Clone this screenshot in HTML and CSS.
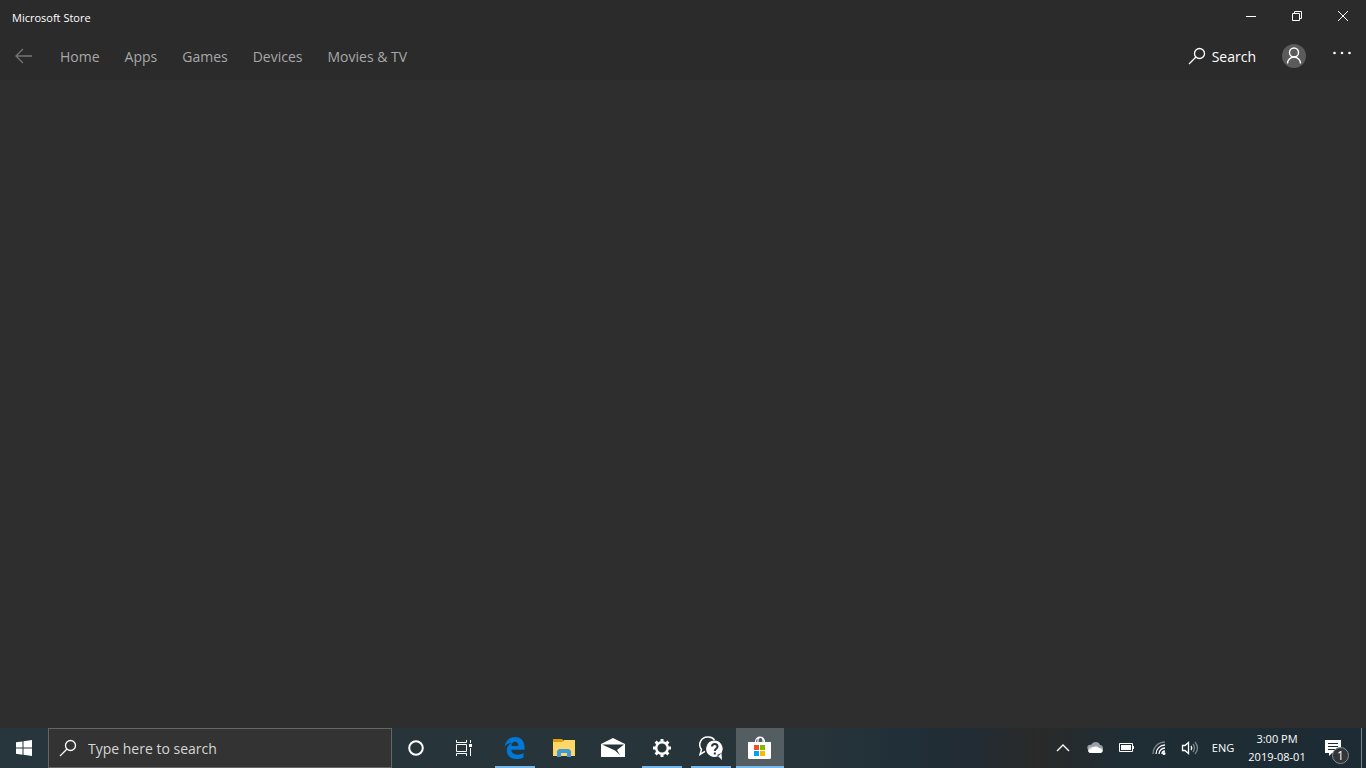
FILE: index.html
```html
<!DOCTYPE html>
<html lang="en">
  <head>
    <meta charset="UTF-8" />
    <meta name="viewport" content="width=device-width, initial-scale=1.0" />
    <title>Microsoft Store</title>
    <link rel="stylesheet" href="styles.css">
  </head>
  <body>
    <div class="desktop">
      <!-- store window -->
      <div class="window">
        <header class="header">
          <div class="titlebar">
            <h1 class="title">Microsoft Store</h1>
            <div class="controls">
              <button type="button" aria-label="Minimize">
                <svg width="12" height="12" viewBox="0 0 12 12"><path d="M1 6.500h10" /></svg>
              </button>
              <button type="button" aria-label="Restore">
                <svg width="12" height="12" viewBox="0 0 12 12"><path d="M1.500 3.500h7v7h-7zM3.500 3.500v-2h7v7h-2" /></svg>
              </button>
              <button type="button" aria-label="Close">
                <svg width="12" height="12" viewBox="0 0 12 12"><path d="M1 1l10 10M11 1L1 11" /></svg>
              </button>
            </div>
          </div>
          <div class="navbar">
            <button type="button" class="back" aria-label="Back">
              <svg width="18" height="16" viewBox="0 0 18 16"><path stroke-width="1.300" d="M17 8H1.500M8 1L1 8l7 7" /></svg>
            </button>
            <nav class="nav">
              <a href="#">Home</a>
              <a href="#">Apps</a>
              <a href="#">Games</a>
              <a href="#">Devices</a>
              <a href="#">Movies &amp; TV</a>
            </nav>
            <div class="tools">
              <button type="button" class="find">
                <svg width="18" height="18" viewBox="0 0 18 18"><circle cx="11.500" cy="6.500" r="5" stroke-width="1.300" /><path stroke-width="1.300" d="M8 10l-7 7" /></svg>
                <span>Search</span>
              </button>
              <button type="button" class="account" aria-label="Account">
                <svg width="24" height="24" viewBox="0 0 24 24"><circle cx="12" cy="12" r="12" class="disc" /><circle cx="12" cy="8.500" r="4.500" stroke-width="1.400" /><path stroke-width="1.400" d="M5.500 19.500a6.500 6.500 0 0 1 13 0" /></svg>
              </button>
              <button type="button" class="more" aria-label="See more">
                <svg width="20" height="10" viewBox="0 0 20 10"><circle class="solid" cx="2.500" cy="4" r="1.300" /><circle class="solid" cx="10" cy="4" r="1.300" /><circle class="solid" cx="17.500" cy="4" r="1.300" /></svg>
              </button>
            </div>
          </div>
        </header>
        <main class="main"></main>
      </div>

      <!-- taskbar -->
      <footer class="taskbar">
        <button type="button" class="task" aria-label="Start">
          <svg width="16" height="16" viewBox="0 0 16 16"><path class="solid" d="M0 2.300L6.500 1.400V7.500H0zM7.500 1.200L16 0V7.500H7.500zM0 8.500H6.500V14.700L0 13.800zM7.500 8.500H16V16L7.500 14.800z" /></svg>
        </button>
        <label class="search">
          <svg width="18" height="18" viewBox="0 0 18 18"><circle cx="11.500" cy="6.500" r="5" stroke-width="1.300" /><path stroke-width="1.300" d="M8 10l-7 7" /></svg>
          <input type="text" placeholder="Type here to search" aria-label="Type here to search" />
        </label>
        <button type="button" class="task" aria-label="Cortana">
          <svg width="18" height="18" viewBox="0 0 18 18"><circle cx="9" cy="9" r="6.800" stroke-width="2" /></svg>
        </button>
        <button type="button" class="task" aria-label="Task view">
          <svg width="18" height="16" viewBox="0 0 18 16"><path d="M1.500 0v2.500h10V0M1.500 4.500h10v7h-10zM1.500 16v-2.500h10V16M15.500 0v3M15.500 8v8" /><path class="solid" d="M14 4h3v3h-3z" /></svg>
        </button>
        <div class="apps">
          <button type="button" class="task open" aria-label="Microsoft Edge">
            <svg width="22" height="22" viewBox="0 0 22 22"><path class="edge" d="M.500 10C1.500 4 5.500 0 11 0C17.500 0 20.500 4.500 20.500 10v2.800H7.200c.3 3.300 3.300 4.900 6.300 4.900 2.400 0 4.400-.7 6-1.700v4.400C17.500 21.500 15 22 12.500 22 6.500 22 2.800 18.400 2.800 13.500c0-3.500 2-6.200 5.200-7.700C4.500 5.900 2.300 7.400.500 10zM7.400 9h6.900c0-2.700-1.200-4.200-3.500-4.200C8.800 4.800 7.500 6.900 7.400 9z" /></svg>
          </button>
          <button type="button" class="task" aria-label="File Explorer">
            <svg width="22" height="20" viewBox="0 0 22 20"><path fill="#e09c0b" stroke="none" d="M0 1h9l1 1v3H0z" /><path fill="#ffd766" stroke="none" d="M0 4h9l2-2h11v16H0z" /><path fill="#3f99dc" stroke="none" d="M6 11h10l2 2v6h-4v-4H8v4H4v-6z" /></svg>
          </button>
          <button type="button" class="task" aria-label="Mail">
            <svg width="24" height="20" viewBox="0 0 24 20"><path class="solid" fill-rule="evenodd" d="M0 6L12 0l12 6v13H0zM1 6.500l13 6 5 4.500-3-5 7-5.500z" /></svg>
          </button>
          <button type="button" class="task open" aria-label="Settings">
            <svg width="20" height="20" viewBox="0 0 20 20"><circle cx="10" cy="10" r="5.800" stroke-width="2.400" /><path stroke-width="3" d="M10 1v3M10 16v3M1 10h3M16 10h3M3.600 3.600l2.200 2.200M14.200 14.200l2.200 2.200M3.600 16.400l2.200-2.200M14.200 5.800l2.200-2.200" /></svg>
          </button>
          <button type="button" class="task open" aria-label="Get Help">
            <svg width="24" height="24" viewBox="0 0 24 24"><path stroke-width="1.500" d="M9 1a7.500 7.500 0 0 1 6.500 3M6 15.300L1 18.500l1.500-5A7.700 7.700 0 0 1 9 1" /><path class="solid" d="M15.500 4.500a8.200 8.200 0 1 1-4 15.400 8.200 8.200 0 0 1 4-15.400zM18 19l5 5-.500-7z" /><path class="mark" d="M13 10.500c0-3.500 5.500-3.500 5.500 0 0 2.300-2.700 2.300-2.700 4.500M15.800 16.500v2" /></svg>
          </button>
          <button type="button" class="task active" aria-label="Microsoft Store">
            <svg width="24" height="24" viewBox="0 0 24 24"><path stroke-width="1.200" d="M7.500 7V5.500a4.500 4.500 0 0 1 9 0V7M10 7V4c0-3.500 5-3.500 5 0v3" /><path class="solid" d="M0 6h23v15.500q0 1.500-1.500 1.500h-20q-1.500 0-1.500-1.500z" /><path fill="#f25022" stroke="none" d="M6 9h5v5H6z" /><path fill="#7fba00" stroke="none" d="M12 9h5v5h-5z" /><path fill="#00a4ef" stroke="none" d="M6 15h5v5H6z" /><path fill="#ffb900" stroke="none" d="M12 15h5v5h-5z" /></svg>
          </button>
        </div>

        <!-- notification area -->
        <div class="tray">
          <button type="button" aria-label="Show hidden icons">
            <svg width="14" height="10" viewBox="0 0 14 10"><path stroke-width="1.400" d="M1 8l6-6 6 6" /></svg>
          </button>
          <button type="button" aria-label="OneDrive">
            <svg width="16" height="12" viewBox="0 0 16 12"><path fill="#9aa1a4" stroke="none" d="M1 8C-1 4 2 2 4 3c2-4 8-4 9 0 3 0 4 4 2 6z" /><path fill="#c8ccce" stroke="none" d="M2 10C0 7 3 4 6 5l8 4v2H3z" /><path class="solid" d="M3 11c-3-1-2-4 1-4 2-3 6-3 8-1 4 0 5 4 2 5z" /></svg>
          </button>
          <button type="button" aria-label="Battery">
            <svg width="16" height="10" viewBox="0 0 16 10"><path d="M.500.500h13v8H.500z" /><path class="solid" d="M2 2h10v5H2zM14 3h1v3h-1z" /></svg>
          </button>
          <button type="button" aria-label="Wi-Fi">
            <svg width="14" height="14" viewBox="0 0 14 14"><path class="dim" stroke-width="1.300" d="M1 13A12 12 0 0 1 13 1" /><path stroke-width="1.300" d="M4 13a9 9 0 0 1 9-9M7 13a6 6 0 0 1 6-6M10 13a3 3 0 0 1 3-3" /><circle class="solid" cx="12" cy="12.500" r="1.500" /></svg>
          </button>
          <button type="button" class="volume" aria-label="Volume">
            <svg width="18" height="14" viewBox="0 0 18 14"><path stroke-width="1.300" d="M1.500 4.500h2.500l3.500-3v11l-3.500-3H1.500zM10 5q1.500 2 0 4" /><path class="dim" stroke-width="1.300" d="M12 3q3 4 0 8M14 1q5 6 0 12" /></svg>
          </button>
          <button type="button" class="lang">ENG</button>
          <button type="button" class="clock"><span>3:00 PM</span><span>2019-08-01</span></button>
          <button type="button" class="notice" aria-label="Notifications, 1 new">
            <svg width="16" height="16" viewBox="0 0 16 16"><path class="solid" d="M0 0h16v13H7l-3 3v-3H0z" /><path class="lines" d="M3 3.500h10M3 6.500h10M3 9.500h7" /></svg>
            <span class="badge">1</span>
          </button>
          <button type="button" class="peek" aria-label="Show desktop"></button>
        </div>
      </footer>
    </div>
  </body>
</html>
```
FILE: styles.css
```css
* {
  margin: 0;
  padding: 0;
  box-sizing: border-box;
}
button {
  border: none;
  background: none;
  color: inherit;
  font: inherit;
  display: flex;
  justify-content: center;
  align-items: center;
}
a {
  text-decoration: none;
  color: inherit;
}
svg {
  flex: none;
  fill: none;
  stroke: #fff;
}
.solid {
  fill: #fff;
  stroke: none;
}

.desktop {
  min-height: 100vh;
  display: flex;
  flex-direction: column;
  color: #fff;
  font: 14px/20px 'Open Sans', 'Noto Sans', sans-serif;
}

/* store window */
.window {
  flex: 1;
  display: flex;
  flex-direction: column;
  background: #2e2e2e;
}
.header {
  background: #2b2b2b;
}
.titlebar {
  height: 32px;
  display: flex;
  justify-content: space-between;
}
.title {
  padding: 8px 12px;
  font-size: 11px;
  font-weight: 400;
}
.controls {
  display: flex;
}
.controls button {
  width: 46px;
}
.navbar {
  height: 48px;
  display: flex;
  align-items: center;
}
.back {
  width: 48px;
  height: 48px;
}
.back svg {
  stroke: #747474;
}
.nav {
  display: flex;
  gap: 25px;
  padding: 2px 12px 0;
  color: #a8a8a8;
}
.tools {
  margin-left: auto;
  display: flex;
  align-items: center;
}
.find {
  gap: 6px;
}
.find span {
  padding-top: 2px;
}
.account {
  width: 48px;
  margin-left: 14px;
}
.account .disc {
  fill: #5b5b5b;
  stroke: none;
}
.more {
  width: 48px;
  padding-bottom: 4px;
}
.main {
  flex: 1;
}

/* taskbar */
.taskbar {
  height: 40px;
  display: flex;
  background: linear-gradient(90deg, #27363c 0, #27343a 60%, #202f38 66%, #222c34 71%, #292a29 76%, #1f2d34 82%, #1c2b34 100%);
}
.task {
  width: 48px;
  height: 40px;
  position: relative;
}
.search {
  width: 344px;
  padding: 0 10px;
  border: 1px solid #666;
  background: #333;
  display: flex;
  align-items: center;
  gap: 11px;
}
.search input {
  flex: 1;
  min-width: 0;
  padding-top: 2px;
  border: none;
  outline: none;
  background: none;
  color: #fff;
  font: inherit;
}
.search input::placeholder {
  color: #d6d6d6;
}
.apps {
  display: flex;
  gap: 1px;
  padding-left: 3px;
}
.open::after,
.active::after {
  content: '';
  position: absolute;
  left: 4px;
  right: 4px;
  bottom: 0;
  height: 2px;
  background: #76b9ed;
}
.active {
  background: #535d62;
}
.active::after {
  left: 0;
  right: 0;
}
.edge {
  fill: #0078d7;
  stroke: none;
}
.mark {
  stroke: #27343a;
  stroke-width: 2;
}

/* notification area */
.tray {
  margin-left: auto;
  display: flex;
  font-size: 11px;
}
.tray button {
  width: 32px;
}
.dim {
  stroke: #7b868c;
}
.tray .volume {
  width: 30px;
}
.tray .lang {
  width: 36px;
}
.tray .clock {
  width: 72px;
  flex-direction: column;
  line-height: 18px;
}
.tray .notice {
  width: 48px;
  padding-right: 8px;
  position: relative;
}
.lines {
  stroke: #1c2b34;
}
.badge {
  position: absolute;
  right: 12px;
  bottom: 4px;
  width: 17px;
  height: 17px;
  border: 1px solid #8b8f91;
  border-radius: 50%;
  background: #333638;
  font-size: 12px;
  line-height: 15px;
}
.tray .peek {
  width: 5px;
  border-left: 1px solid #788287;
}
```
